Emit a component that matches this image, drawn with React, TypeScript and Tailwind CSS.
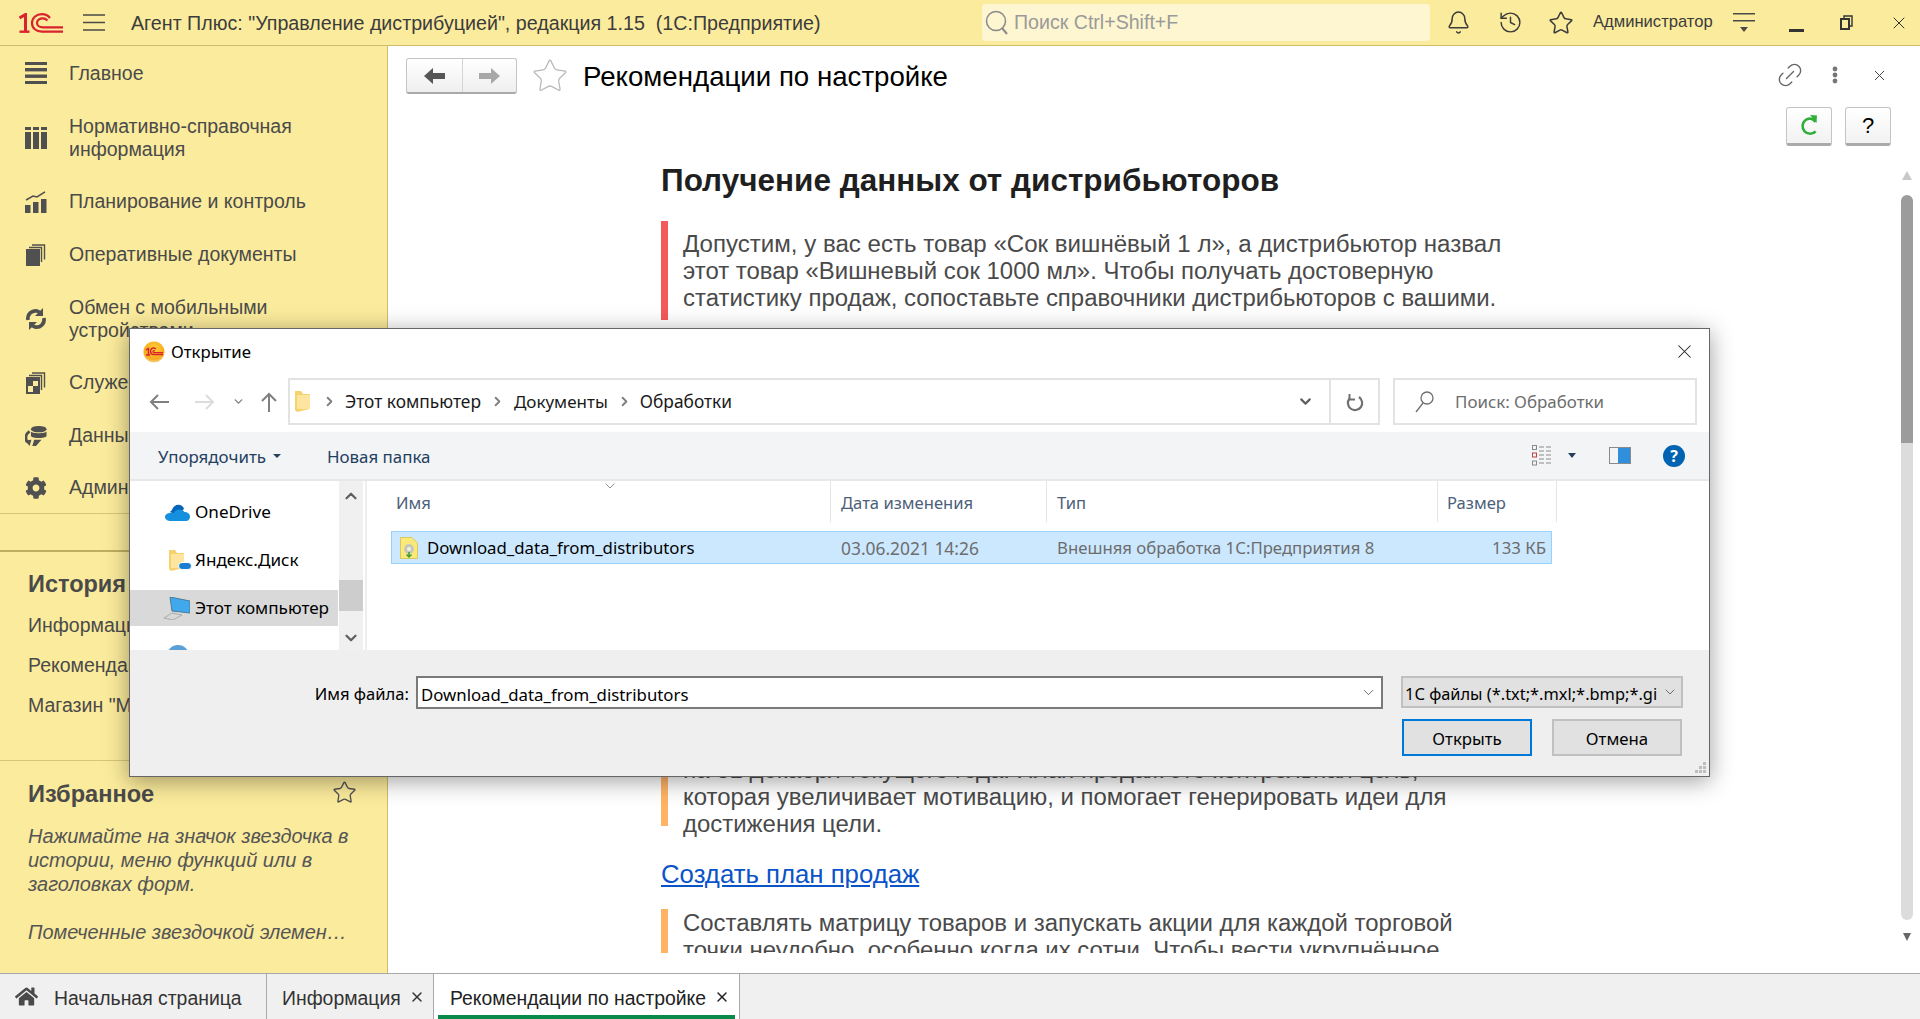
import { Bell, ChevronDown, ChevronUp, History, Link2, Star, X } from 'lucide-react';
import { FaCog, FaHome } from 'react-icons/fa';

const ICON = '#505050';

function Logo1C() {
  return (
    <svg width="44" height="20" viewBox="0 0 44 20" fill="none" stroke="#d9232e">
      <path d="M0.5 5 L6.5 1.5 V18.5" strokeWidth="3" />
      <path d="M0.5 18.7 H10.5" strokeWidth="2.4" />
      <path d="M31 5 C28.5 2 26 1.2 23 1.2 C17 1.2 13 5 13 10 C13 15.2 17 18.6 23 18.6 H44" strokeWidth="2.2" />
      <path d="M28.5 7.5 C27 6 25.5 5.4 24 5.4 C20.5 5.4 18 7.2 18 10 C18 12.6 20.5 14.4 24 14.4 H44" strokeWidth="2.2" />
    </svg>
  );
}

function DialogLogo() {
  return (
    <svg width="22" height="22" viewBox="0 0 22 22">
      <defs>
        <radialGradient id="dlg" cx="50%" cy="35%" r="70%">
          <stop offset="0%" stopColor="#ffd23a" />
          <stop offset="70%" stopColor="#f8a91c" />
          <stop offset="100%" stopColor="#f3e3b0" />
        </radialGradient>
      </defs>
      <circle cx="11" cy="11" r="10.6" fill="url(#dlg)" />
      <path d="M3 9 L5.5 7.5 V14 M3 14 H7" stroke="#d9232e" strokeWidth="1.5" fill="none" />
      <path d="M13 8 C12 7 11 7 10.3 7 C8.5 7 7.6 8.6 7.6 10.3 C7.6 12 8.6 13.5 10.5 13.5 H20" stroke="#d9232e" strokeWidth="1.4" fill="none" />
      <path d="M12 10 C11 9.4 9.8 9.8 9.8 10.5 C9.8 11.2 10.6 11.6 11.4 11.6 H20" stroke="#d9232e" strokeWidth="1.2" fill="none" />
    </svg>
  );
}

function MainIcon() {
  return (
    <svg width="22" height="22" viewBox="0 0 22 22" fill={ICON}>
      <rect x="0" y="0" width="22" height="3" />
      <rect x="0" y="6" width="22" height="3.4" />
      <rect x="0" y="12.5" width="22" height="3.4" />
      <rect x="0" y="19" width="22" height="3" />
    </svg>
  );
}

function CatalogIcon() {
  return (
    <svg width="22" height="22" viewBox="0 0 22 22" fill={ICON}>
      <rect x="0" y="0" width="6" height="3" />
      <rect x="8" y="0" width="6" height="3" />
      <rect x="16" y="0" width="6" height="3" />
      <rect x="0" y="5" width="6" height="17" />
      <rect x="8" y="5" width="6" height="17" />
      <rect x="16" y="5" width="6" height="17" />
    </svg>
  );
}

function PlanIcon() {
  return (
    <svg width="22" height="22" viewBox="0 0 22 22" fill={ICON}>
      <rect x="0" y="14" width="5.5" height="8" />
      <rect x="8" y="11" width="5.5" height="11" />
      <rect x="16" y="8" width="5.5" height="14" />
      <path d="M1 9 L8 5 L12 6 L20 0.8" stroke={ICON} strokeWidth="1.6" fill="none" />
    </svg>
  );
}

function DocsIcon() {
  return (
    <svg width="20" height="22" viewBox="0 0 20 22" fill={ICON}>
      <rect x="0" y="5" width="14" height="17" />
      <path d="M3 3.5 H15.5 V18 M6 1 H18.5 V15.5" stroke={ICON} strokeWidth="1.4" fill="none" />
    </svg>
  );
}

function SyncIcon() {
  return (
    <svg width="22" height="24" viewBox="0 0 22 24" fill="none" stroke={ICON} strokeWidth="3.6">
      <path d="M3 13 C2 7 7 3 12 4 L16 6" />
      <path d="M19 11 C20 17 15 21 10 20 L6 18" />
      <path d="M18 1 V9 H10 Z M4 23 V15 H12 Z" fill={ICON} stroke="none" />
    </svg>
  );
}

function ServiceIcon() {
  return (
    <svg width="20" height="22" viewBox="0 0 20 22" fill={ICON}>
      <path fillRule="evenodd" d="M0 5 H14 V22 H0 Z M7 9 V14 H2 V20 H7 V14 H12 V9 Z" />
      <path d="M3 3.5 H15.5 V18 M6 1 H18.5 V15.5" stroke={ICON} strokeWidth="1.4" fill="none" />
    </svg>
  );
}

function DataIcon() {
  return (
    <svg width="24" height="22" viewBox="0 0 24 22" fill={ICON}>
      <ellipse cx="15" cy="3.5" rx="8.5" ry="3.5" />
      <path d="M6.5 6 C8 8.5 22 8.5 23.5 6 V11 C22 14 8 14 6.5 11 Z" />
      <path d="M5 6 C1 8.5 0 13 2.5 18" stroke={ICON} strokeWidth="3" fill="none" />
      <path d="M0 16 L7 15 L5 22 Z M10 15 H18 L12 22 H8 Z" />
    </svg>
  );
}

const menu = [
  { lines: ['Главное'], icon: <MainIcon />, h: 'h-[54px]' },
  { lines: ['Нормативно-справочная', 'информация'], icon: <CatalogIcon />, h: 'h-[75px]' },
  { lines: ['Планирование и контроль'], icon: <PlanIcon />, h: 'h-[53px]' },
  { lines: ['Оперативные документы'], icon: <DocsIcon />, h: 'h-[53px]' },
  { lines: ['Обмен с мобильными', 'устройствами'], icon: <SyncIcon />, h: 'h-[75px]' },
  { lines: ['Служебные'], icon: <ServiceIcon />, h: 'h-[53px]' },
  { lines: ['Данные'], icon: <DataIcon />, h: 'h-[53px]' },
  { lines: ['Администрирование'], icon: <FaCog size={22} color={ICON} />, h: 'h-[51px]' },
];

function ArrowIcon({ color, flip }: { color: string; flip?: boolean }) {
  return (
    <svg width="21" height="16" viewBox="0 0 21 16" fill={color} className={flip ? 'rotate-180' : ''}>
      <path d="M0 8 L9 0 V5 H21 V11 H9 V16 Z" />
    </svg>
  );
}

function Sidebar() {
  return (
    <aside className="w-[388px] shrink-0 bg-[#fbeb9c] border-r border-[#cdbd68] flex flex-col text-[19.5px] text-[#4a4a4a]">
      <div className="border-b border-[#d6c675]">
        {menu.map((item) => (
          <div key={item.lines[0]} className={`${item.h} flex items-center pl-[25px]`}>
            <div className="w-[22px] flex justify-center shrink-0">{item.icon}</div>
            <div className="ml-[22px] leading-[23px]">
              {item.lines.map((line) => (
                <div key={line} className="whitespace-nowrap">{line}</div>
              ))}
            </div>
          </div>
        ))}
      </div>

      <div className="mt-[36px] border-t-2 border-[#bfae62] pl-[28px] h-[210px]">
        <div className="mt-[18px] text-[23.5px] font-bold leading-[28px]">История</div>
        <div className="mt-[15px] leading-[24px] whitespace-nowrap">Информация</div>
        <div className="mt-[16px] leading-[24px] whitespace-nowrap">Рекомендации по настройке</div>
        <div className="mt-[16px] leading-[24px] whitespace-nowrap">Магазин "Мобильное приложение"</div>
      </div>

      <div className="border-t border-[#d6c675] pl-[28px] pr-[30px] flex-1">
        <div className="mt-[19px] flex items-center justify-between">
          <span className="text-[23.6px] font-bold leading-[28px]">Избранное</span>
          <Star size={25} strokeWidth={1.3} color="#505050" className="-mt-[3px]" />
        </div>
        <div className="mt-[16px] italic text-[19.95px] leading-[24px] text-[#555]">
          <div>Нажимайте на значок звездочка в</div>
          <div>истории, меню функций или в</div>
          <div>заголовках форм.</div>
          <div className="mt-[24px] whitespace-nowrap">Помеченные звездочкой элемен…</div>
        </div>
      </div>
    </aside>
  );
}

function TopBar() {
  return (
    <header className="h-[46px] shrink-0 bg-[#fbeb9c] border-b border-[#cdbd68] flex items-center text-[#3c3c3c]">
      <div className="ml-[19px]"><Logo1C /></div>
      <svg width="22" height="17" viewBox="0 0 22 17" className="ml-[20px]" stroke="#4a4a4a" strokeWidth="1.3">
        <path d="M0 1 H22 M0 8.5 H22 M0 16 H22" />
      </svg>
      <div className="ml-[26px] w-[851px] text-[19.67px] whitespace-pre pt-[2px]">Агент Плюс: "Управление дистрибуцией", редакция 1.15  (1С:Предприятие)</div>
      <div className="w-[448px] h-[37px] rounded-[3px] bg-[#fdf6d0] flex items-center pl-[3px] text-[19.6px] text-[#9a9a9a]">
        <svg width="25" height="26" viewBox="0 0 25 26" fill="none" stroke="#8a8a8a" strokeWidth="1.5">
          <circle cx="11" cy="11" r="9.5" />
          <path d="M17 18 L22 24" strokeWidth="2" />
        </svg>
        <span className="ml-[4px] pt-[1px]">Поиск Ctrl+Shift+F</span>
      </div>
      <Bell size={25} strokeWidth={1.4} className="ml-[16px]" color="#3c3c3c" />
      <History size={25} strokeWidth={1.4} className="ml-[27px]" color="#3c3c3c" />
      <Star size={26} strokeWidth={1.4} className="ml-[25px]" color="#3c3c3c" />
      <span className="ml-[19px] text-[16.6px]">Администратор</span>
      <svg width="22" height="22" viewBox="0 0 22 22" className="ml-[20px]" fill="#4a4a4a">
        <rect x="0" y="1" width="22" height="1.5" />
        <rect x="0" y="8" width="22" height="1.5" />
        <path d="M7 15 H15 L11 20 Z" />
      </svg>
      <div className="ml-[34px] w-[15px] h-[3px] bg-[#333] mt-[15px]" />
      <svg width="13" height="15" viewBox="0 0 13 15" className="ml-[36px]" fill="none" stroke="#333" strokeWidth="2">
        <rect x="1" y="4" width="8" height="10" />
        <path d="M4 3 V1 H12 V11 H9.5" strokeWidth="1.4" />
      </svg>
      <X size={20} strokeWidth={1.2} color="#333" className="ml-[36px]" />
    </header>
  );
}

function MainArea() {
  return (
    <main className="flex-1 bg-white flex flex-col pb-[20px] min-w-0">
      <div className="h-[61px] shrink-0 flex items-start pt-[12px] pl-[18px] pr-[32px]">
        <div className="w-[111px] h-[36px] rounded-[3px] border border-[#c4c4c4] border-b-2 border-b-[#aaa] bg-gradient-to-b from-white to-[#efefef] flex">
          <div className="w-[56px] border-r border-[#d4d4d4] flex items-center justify-center"><ArrowIcon color="#565656" /></div>
          <div className="flex-1 flex items-center justify-center"><ArrowIcon color="#a8a8a8" flip /></div>
        </div>
        <Star size={38} strokeWidth={0.8} color="#b8b8b8" className="ml-[14px] -mt-[1px]" />
        <h1 className="ml-[14px] text-[27.65px] leading-[36px] pt-[1px] text-black whitespace-nowrap">Рекомендации по настройке</h1>
        <div className="ml-auto flex items-center h-[34px]">
          <Link2 size={30} strokeWidth={1.1} color="#666" className="-rotate-45" />
          <svg width="6" height="18" viewBox="0 0 6 18" className="ml-[27px]" fill="#777">
            <circle cx="3" cy="3" r="2.4" />
            <circle cx="3" cy="9" r="2.4" />
            <circle cx="3" cy="15" r="2.4" />
          </svg>
          <X size={17} strokeWidth={1.4} color="#444" className="ml-[33px]" />
        </div>
      </div>

      <div className="h-[39px] shrink-0 flex justify-end gap-[13px] pr-[29px]">
        <div className="w-[46px] rounded-[3px] border border-[#c4c4c4] border-b-[3px] border-b-[#aaa] bg-gradient-to-b from-white to-[#f2f2f2] flex items-center justify-center">
          <svg width="18" height="24" viewBox="0 0 18 24" fill="none" stroke="#2fae3a" strokeWidth="2.6">
            <path d="M15.5 8 C13.5 4.5 9 3.6 5.6 6 C2 8.8 1.6 14 4.6 17.4 C7.6 20.6 12.8 20.6 15.6 17.4" />
            <path d="M10 1 L17 1.5 L16.5 9 Z" fill="#2fae3a" stroke="none" />
          </svg>
        </div>
        <div className="w-[46px] rounded-[3px] border border-[#c4c4c4] border-b-[3px] border-b-[#aaa] bg-gradient-to-b from-white to-[#f2f2f2] flex items-center justify-center text-[22px] text-black">?</div>
      </div>

      <div className="flex-1 flex min-h-0">
        <div className="flex-1 overflow-hidden pl-[273px] text-[23.95px] leading-[27px] text-[#4a4a4a]">
          <h2 className="mt-[14px] text-[31.5px] leading-[40px] font-bold text-[#1f1f1f] whitespace-nowrap">Получение данных от дистрибьюторов</h2>
          <div className="mt-[21px] border-l-[7px] border-[#f55a5a] pl-[15px] py-[9px] whitespace-nowrap">
            <div className="text-[24.08px]">Допустим, у вас есть товар «Сок вишнёвый 1 л», а дистрибьютор назвал</div>
            <div>этот товар «Вишневый сок 1000 мл». Чтобы получать достоверную</div>
            <div>статистику продаж, сопоставьте справочники дистрибьюторов с вашими.</div>
          </div>
          <div className="mt-[436px] h-[70px] border-l-[7px] border-[#ffb366] pl-[15px] whitespace-nowrap">
            <div>на 31 декабря текущего года. План продаж это контрольная цель,</div>
            <div>которая увеличивает мотивацию, и помогает генерировать идеи для</div>
            <div>достижения цели.</div>
          </div>
          <a className="block mt-[33px] text-[25.75px] leading-[30px] text-[#0b54c8] underline">Создать план продаж</a>
          <div className="mt-[20px] border-l-[7px] border-[#ffb366] pl-[15px] whitespace-nowrap">
            <div>Составлять матрицу товаров и запускать акции для каждой торговой</div>
            <div>точки неудобно, особенно когда их сотни. Чтобы вести укрупнённое</div>
          </div>
        </div>
        <div className="w-[12px] mr-[7px] shrink-0 flex flex-col items-center pt-[25px]">
          <div className="w-0 h-0 border-x-[5px] border-x-transparent border-b-[9px] border-b-[#c8c8c8]" />
          <div className="mt-[15px] w-[12px] h-[248px] rounded-t-[6px] bg-[#9c9c9c]" />
          <div className="w-[12px] h-[477px] rounded-b-[6px] bg-[#dcdcdc]" />
          <div className="mt-[13px] w-0 h-0 border-x-[4px] border-x-transparent border-t-[8px] border-t-[#666]" />
        </div>
      </div>
    </main>
  );
}

function TabBar() {
  return (
    <footer className="h-[46px] shrink-0 bg-[#f0f0f0] border-t border-[#a8a8a8] flex text-[19.4px] text-[#333]">
      <div className="w-[267px] border-r border-[#a8a8a8] flex items-center pl-[15px]">
        <FaHome size={23} color="#4a4a4a" />
        <span className="ml-[16px] pt-[5px]">Начальная страница</span>
      </div>
      <div className="w-[167px] border-r border-[#a8a8a8] flex items-center pl-[15px]">
        <span className="pt-[5px]">Информация</span>
        <X size={16} strokeWidth={2.2} className="ml-[8px]" />
      </div>
      <div className="w-[306px] border-r border-[#a8a8a8] bg-white flex items-center pl-[16px] relative text-[#222]">
        <span className="pt-[5px]">Рекомендации по настройке</span>
        <X size={16} strokeWidth={2.2} className="ml-[8px]" />
        <div className="absolute left-[4px] right-[4px] bottom-0 h-[4px] bg-[#0a8a4a]" />
      </div>
    </footer>
  );
}

function OneDriveIcon() {
  return (
    <svg width="25" height="17" viewBox="0 0 25 17">
      <path d="M7 6 C8 2 12 0 15 1 C17 1.5 18.5 3 19 5 L12 11 L5 8 Z" fill="#0364b8" />
      <path d="M6 17 H21 C24 17 25 14.5 25 12.5 C25 9.5 22 8 19.5 8 C16 4 10 5.5 9 9 C5 8 0 9.5 0 13 C0 15.5 3 17 6 17 Z" fill="#1490df" />
    </svg>
  );
}

function FolderIcon() {
  return (
    <svg width="15" height="21" viewBox="0 0 15 21">
      <path d="M0 0 H6 L8 3 H15 V18 L2 21 L0 19 Z" fill="#f6d26e" />
      <path d="M2 4 H15 V18 H2 Z" fill="#fde59f" />
    </svg>
  );
}

function NavList() {
  return (
    <div className="w-[208px] h-full overflow-hidden pt-[13px] text-[17.1px] text-black shrink-0">
      {[
        { label: 'OneDrive', icon: <OneDriveIcon />, pad: 'pl-[35px]', gap: 'ml-[5px]' },
        {
          label: 'Яндекс.Диск',
          icon: (
            <div className="relative">
              <FolderIcon />
              <div className="absolute right-[-8px] bottom-[1px] w-[14px] h-[8px] rounded-full bg-[#1a7dd0] border border-white" />
            </div>
          ),
          pad: 'pl-[39px]',
          gap: 'ml-[11px]',
        },
        {
          label: 'Этот компьютер',
          icon: (
            <svg width="26" height="23" viewBox="0 0 26 23">
              <path d="M6 0 L26 4 V16 L8 14 Z" fill="#3fa9ec" stroke="#4a7a99" strokeWidth="1" />
              <path d="M0 21 L8 16 L18 18 L9 23 Z" fill="#d8d8d8" stroke="#a0a0a0" strokeWidth="0.8" />
            </svg>
          ),
          pad: 'pl-[34px]',
          gap: 'ml-[5px]',
          active: true,
        },
        {
          label: 'Сеть',
          icon: <div className="w-[22px] h-[22px] rounded-full bg-[#5a9fd6]" />,
          pad: 'pl-[37px]',
          gap: 'ml-[6px]',
        },
      ].map((row) => (
        <div key={row.label} className={`h-[36px] mb-[12px] flex items-center ${row.pad} ${row.active ? 'bg-[#d9d9d9]' : ''}`}>
          {row.icon}
          <span className={`${row.gap} whitespace-nowrap`}>{row.label}</span>
        </div>
      ))}
    </div>
  );
}

function OpenDialog() {
  return (
    <div className="absolute left-[129px] top-[328px] w-[1581px] h-[449px] bg-white border border-[#666] shadow-[0_4px_22px_rgba(0,0,0,0.38)] flex flex-col [font-family:'Noto_Sans',sans-serif] text-[17.2px]">
      <div className="h-[45px] shrink-0 flex items-center pl-[13px] pr-[13px]">
        <DialogLogo />
        <span className="ml-[6px] text-black text-[16.8px]">Открытие</span>
        <X size={23} strokeWidth={1.1} color="#222" className="ml-auto" />
      </div>

      <div className="mt-[4px] h-[47px] shrink-0 flex items-center">
        <div className="w-[158px] flex items-center shrink-0">
          <svg width="20" height="16" viewBox="0 0 20 16" fill="none" stroke="#808080" strokeWidth="2" className="ml-[19px]">
            <path d="M20 8 H2 M9 1 L2 8 L9 15" />
          </svg>
          <svg width="20" height="16" viewBox="0 0 20 16" fill="none" stroke="#dcdcdc" strokeWidth="2" className="ml-[26px]">
            <path d="M0 8 H18 M11 1 L18 8 L11 15" />
          </svg>
          <ChevronDown size={13} strokeWidth={2.6} color="#808080" className="ml-[17px]" />
          <svg width="16" height="20" viewBox="0 0 16 20" fill="none" stroke="#808080" strokeWidth="2" className="ml-[16px]">
            <path d="M8 20 V2 M1 9 L8 2 L15 9" />
          </svg>
        </div>
        <div className="w-[1092px] h-full border-2 border-[#e3e3e3] flex items-center">
          <div className="ml-[5px]"><FolderIcon /></div>
          <div className="ml-[12px] flex items-center text-[#1a1a1a] text-[17.35px]">
            <ChevronDown size={15} strokeWidth={3} color="#808080" className="-rotate-90" />
            <span className="ml-[8px] whitespace-nowrap">Этот компьютер</span>
            <ChevronDown size={15} strokeWidth={3} color="#808080" className="-rotate-90 ml-[9px]" />
            <span className="ml-[9px] whitespace-nowrap text-[17px]">Документы</span>
            <ChevronDown size={15} strokeWidth={3} color="#808080" className="-rotate-90 ml-[9px]" />
            <span className="ml-[8px] whitespace-nowrap">Обработки</span>
          </div>
          <ChevronDown size={17} strokeWidth={3} color="#606060" className="ml-auto mr-[15px]" />
          <div className="w-[49px] h-full border-l-2 border-[#e3e3e3] flex items-center justify-center">
            <svg width="18" height="20" viewBox="0 0 18 20" fill="none" stroke="#707070" strokeWidth="2.2">
              <path d="M13 5 C16.5 7.5 17 12 15 15 C12.5 18.5 7.5 19 4.5 16.5 C1.5 14 1 9.5 3.5 6.5" />
              <path d="M3.5 2 V7.5 H9" strokeWidth="2" />
            </svg>
          </div>
        </div>
        <div className="ml-[13px] w-[304px] h-full border-2 border-[#e3e3e3] flex items-center pl-[20px] text-[#6d6d6d]">
          <svg width="19" height="22" viewBox="0 0 19 22" fill="none" stroke="#707070" strokeWidth="1.3">
            <circle cx="12" cy="7" r="6" />
            <path d="M8 12 L1 21" />
          </svg>
          <span className="ml-[21px] text-[16.9px]">Поиск: Обработки</span>
        </div>
      </div>

      <div className="mt-[7px] h-[49px] shrink-0 bg-[#f3f4f6] border-b-2 border-[#e8e8e8] flex items-center text-[#24405f] text-[16.9px]">
        <span className="ml-[28px] pt-[2px]">Упорядочить</span>
        <div className="ml-[7px] w-0 h-0 border-x-[4px] border-x-transparent border-t-[4px] border-t-[#24405f]" />
        <span className="ml-[46px] pt-[2px]">Новая папка</span>
        <svg width="21" height="21" viewBox="0 0 21 21" className="ml-auto" fill="none">
          <rect x="0.5" y="0.5" width="4" height="4" stroke="#8a8a8a" />
          <rect x="0.5" y="8" width="4" height="4" stroke="#c04040" />
          <rect x="0.5" y="16" width="4" height="4" stroke="#8a8a8a" />
          <path d="M7 2 H21 M7 6 H21 M7 10 H21 M7 14 H21 M7 18 H21" stroke="#8a8a8a" strokeDasharray="5 2" />
        </svg>
        <div className="ml-[15px] w-0 h-0 border-x-[4px] border-x-transparent border-t-[5px] border-t-[#24405f]" />
        <div className="ml-[33px] w-[22px] h-[17px] border border-[#8a8a8a] flex justify-end">
          <div className="w-[12px] bg-[#2f8fdc]" />
        </div>
        <div className="ml-[32px] mr-[24px] w-[22px] h-[22px] rounded-full bg-[#0063b1] text-white text-[16px] font-bold flex items-center justify-center">?</div>
      </div>

      <div className="h-[169px] shrink-0 flex overflow-hidden">
        <NavList />
        <div className="w-[24px] ml-[1px] bg-[#f0f0f0] flex flex-col items-center shrink-0">
          <ChevronUp size={18} strokeWidth={3} color="#606060" className="mt-[6px]" />
          <div className="mt-[75px] w-full h-[31px] bg-[#cdcdcd]" />
          <ChevronDown size={18} strokeWidth={3} color="#606060" className="mt-[18px]" />
        </div>
        <div className="ml-[2px] flex-1 border-l-2 border-[#eeeeee] relative min-w-0">
          <ChevronDown size={16} strokeWidth={1.1} color="#666" className="absolute left-[235px] top-[-3px]" />
          <div className="h-[41px] flex text-[#4c607a] text-[16.6px]">
            <div className="w-[464px] border-r border-[#e5e5e5] pl-[29px] pt-[10px]">Имя</div>
            <div className="w-[216px] border-r border-[#e5e5e5] pl-[10px] pt-[10px]">Дата изменения</div>
            <div className="w-[391px] border-r border-[#e5e5e5] pl-[10px] pt-[10px]">Тип</div>
            <div className="w-[119px] border-r border-[#e5e5e5] pl-[9px] pt-[10px]">Размер</div>
          </div>
          <div className="mt-[9px] ml-[24px] w-[1161px] h-[33px] bg-[#cce8ff] border border-[#99d1ff] flex items-center text-[#6d6d6d] pt-[1px]">
            <svg width="18" height="22" viewBox="0 0 18 22" className="ml-[8px] shrink-0">
              <path d="M0.5 0.5 H12 L17.5 6 V21.5 H0.5 Z" fill="#fbe97a" stroke="#d9c860" />
              <circle cx="9" cy="12" r="5" fill="#c8c8b8" />
              <circle cx="9" cy="12" r="2" fill="#f0f0e0" />
              <path d="M9 15 V20 M6.5 17.5 L9 20 L11.5 17.5" stroke="#3c9c3c" strokeWidth="1.5" fill="none" />
            </svg>
            <span className="ml-[9px] w-[414px] text-black text-[16.8px]">Download_data_from_distributors</span>
            <span className="w-[216px] text-[17.4px]">03.06.2021 14:26</span>
            <span className="w-[382px] text-[16.75px]">Внешняя обработка 1С:Предприятия 8</span>
            <span className="w-[107px] text-right text-[16.8px]">133 КБ</span>
          </div>
        </div>
      </div>

      <div className="flex-1 bg-[#efefef] relative pt-[26px]">
        <div className="flex h-[33px]">
          <div className="w-[286px] pr-[7px] pt-[4px] flex items-center justify-end text-black text-[16.6px]">Имя файла:</div>
          <div className="w-[967px] bg-white border-2 border-[#7a7a7a] flex items-center pl-[3px] text-black text-[16.8px]">
            <span className="pt-[5px]">Download_data_from_distributors</span>
            <ChevronDown size={17} strokeWidth={1} color="#333" className="ml-auto mr-[4px]" />
          </div>
          <div className="ml-[18px] w-[282px] h-[32px] bg-[#e1e1e1] border-2 border-[#c0c0c0] flex items-center pl-[2px] text-black overflow-hidden text-[16.4px]">
            <span className="whitespace-nowrap overflow-hidden flex-1 pt-[4px]">1С файлы (*.txt;*.mxl;*.bmp;*.gi</span>
            <ChevronDown size={16} strokeWidth={1} color="#333" className="mx-[3px] shrink-0" />
          </div>
        </div>
        <div className="mt-[10px] flex justify-end gap-[20px] pr-[27px] text-[16.8px]">
          <div className="w-[130px] h-[37px] bg-[#e1e1e1] border-2 border-[#0078d7] flex items-center justify-center text-black pt-[2px]">Открыть</div>
          <div className="w-[130px] h-[37px] bg-[#e1e1e1] border-2 border-[#c0c0c0] flex items-center justify-center text-black pt-[2px]">Отмена</div>
        </div>
        <svg width="12" height="12" viewBox="0 0 12 12" fill="#bdbdbd" className="absolute right-[2px] bottom-[2px]">
          <rect x="8" y="0" width="3" height="3" />
          <rect x="4" y="4" width="3" height="3" />
          <rect x="8" y="4" width="3" height="3" />
          <rect x="0" y="8" width="3" height="3" />
          <rect x="4" y="8" width="3" height="3" />
          <rect x="8" y="8" width="3" height="3" />
        </svg>
      </div>
    </div>
  );
}

export default function App() {
  return (
    <div className="relative w-[1920px] h-[1019px] overflow-hidden flex flex-col bg-white [font-family:'Liberation_Sans',Arial,sans-serif]">
      <TopBar />
      <div className="flex-1 flex min-h-0">
        <Sidebar />
        <MainArea />
      </div>
      <TabBar />
      <OpenDialog />
    </div>
  );
}
